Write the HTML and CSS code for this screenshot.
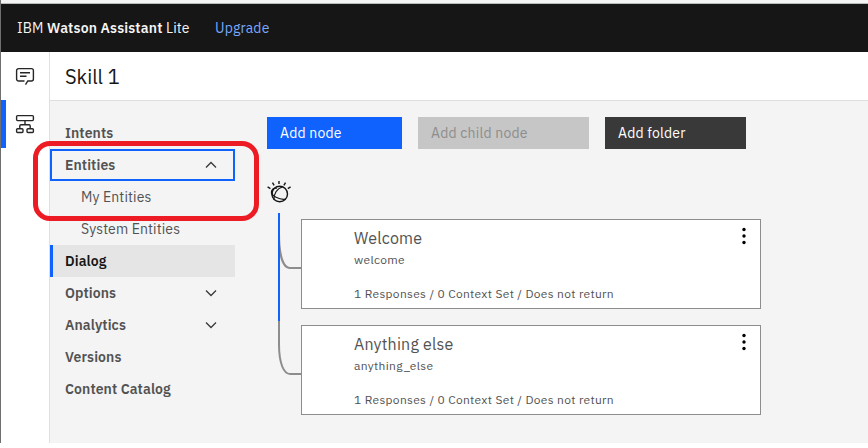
FILE: index.html
```html
<!DOCTYPE html>
<html lang="en">
<head>
<meta charset="utf-8">
<title>IBM Watson Assistant Lite</title>
<link rel="stylesheet" href="styles.css">
</head>
<body>
<div class="app">
  <header class="topbar">
    <div class="brand">IBM <b>Watson Assistant</b> Lite</div>
    <a class="upgrade">Upgrade</a>
  </header>
  <div class="shell">
    <nav class="rail">
      <a class="rail-item"><svg width="20" height="20" viewBox="0 0 20 20"><g fill="none" stroke="#262626" stroke-width="1.4"><path d="M9.500 15H3.600a2 2 0 0 1-2-2V4.600a2 2 0 0 1 2-2h12.800a2 2 0 0 1 2 2V13a2 2 0 0 1-2 2h-3.600l-2.300 3.700M5 6.800h10M5 10.300h6.500"/></g></svg></a>
      <a class="rail-item rail-item--active"><svg width="20" height="20" viewBox="0 0 20 20"><g fill="none" stroke="#262626" stroke-width="1.4"><rect x="1.600" y="1.600" width="16.800" height="5" rx="1"/><rect x="1.600" y="14.700" width="6.400" height="3.800" rx="1"/><rect x="12" y="14.700" width="6.400" height="3.800" rx="1"/><path d="M10 6.600v4M4.800 14.700v-2.800a1.200 1.200 0 0 1 1.200-1.200h8a1.200 1.200 0 0 1 1.200 1.200v2.800"/></g></svg></a>
    </nav>
    <main class="page">
      <h1 class="title">Skill 1</h1>
      <div class="workspace">
        <ul class="menu">
          <li class="item"><span>Intents</span></li>
          <li class="item item--focus"><span>Entities</span><svg class="chev" width="12" height="8" viewBox="0 0 12 8"><path d="M1 6.500 6 1.500l5 5"/></svg></li>
          <li class="item item--sub"><span>My Entities</span></li>
          <li class="item item--sub"><span>System Entities</span></li>
          <li class="item item--current"><span>Dialog</span></li>
          <li class="item"><span>Options</span><svg class="chev" width="12" height="8" viewBox="0 0 12 8"><path d="M1 1.500l5 5 5-5"/></svg></li>
          <li class="item"><span>Analytics</span><svg class="chev" width="12" height="8" viewBox="0 0 12 8"><path d="M1 1.500l5 5 5-5"/></svg></li>
          <li class="item"><span>Versions</span></li>
          <li class="item"><span>Content Catalog</span></li>
        </ul>
        <section class="editor">
          <div class="actions">
            <button class="btn btn--primary">Add node</button>
            <button class="btn btn--disabled" disabled>Add child node</button>
            <button class="btn btn--dark">Add folder</button>
          </div>
          <svg class="watson" width="24" height="24" viewBox="0 0 24 24"><g fill="none" stroke="#161616" stroke-width="1.400"><circle cx="12.700" cy="14" r="7.800"/><path d="M15.600 7C10 8.200 6.500 14.200 7 19.700M5.300 12.800C4.300 15.400 12 20 18.400 19.200M9.800 8.400C4.500 7.200 3 12.700 6 15.700" stroke-width="1.200"/><path d="M12 1v3M5.500 2.700l1.600 2.700M18.500 2.700l-1.600 2.700M.6 6.900l2.800 1.700M23.600 6.900l-2.800 1.700"/></g></svg>
          <div class="tree">
            <svg class="links" width="23" height="202" viewBox="0 0 23 202"><g fill="none" stroke="#8d8d8d"><path d="M1 20C1 45 6 55 12 55H23" stroke-width="2"/><path d="M1 108V131C1 151 6 161 12 161H23" stroke-width="2"/></g><path d="M1 0V108" stroke="#0f62fe" stroke-width="2"/></svg>
            <div class="nodes">
              <article class="node">
                <div><h2>Welcome</h2><p>welcome</p><p class="meta">1 Responses / 0 Context Set / Does not return</p></div>
                <svg class="kebab" width="6" height="18" viewBox="0 0 6 18"><circle cx="3" cy="2.500" r="1.700"/><circle cx="3" cy="9" r="1.700"/><circle cx="3" cy="15.500" r="1.700"/></svg>
              </article>
              <article class="node">
                <div><h2>Anything else</h2><p>anything_else</p><p class="meta">1 Responses / 0 Context Set / Does not return</p></div>
                <svg class="kebab" width="6" height="18" viewBox="0 0 6 18"><circle cx="3" cy="2.500" r="1.700"/><circle cx="3" cy="9" r="1.700"/><circle cx="3" cy="15.500" r="1.700"/></svg>
              </article>
            </div>
          </div>
        </section>
      </div>
    </main>
  </div>
  <div class="highlight"></div>
</div>
</body>
</html>
```
FILE: styles.css
```css
* { box-sizing: border-box; margin: 0; padding: 0; }
body { background: #fff; font: 14px/18px "IBM Plex Sans", Roboto, sans-serif; color: #525252; overflow: hidden; }
svg { display: block; flex: none; }
.app { position: relative; height: 443px; border-left: 1px solid #6f6f6f; display: flex; flex-direction: column; white-space: nowrap; }
.topbar { height: 52px; flex: none; background: #161616; border-top: 3px solid #f4f4f4; box-shadow: inset 0 1px #b9bdb9; display: flex; align-items: center; padding-left: 16px; }
.brand { color: #f4f4f4; width: 198px; letter-spacing: .16px; }
.brand b { font-weight: 600; }
.upgrade { color: #78a9ff; letter-spacing: .16px; }
.shell { flex: 1; display: flex; min-height: 0; }
.rail { width: 49px; border-right: 1px solid #e0e0e0; background: #fff; }
.rail-item { height: 48px; display: flex; align-items: center; padding-left: 14px; }
.rail-item--active { border-left: 5px solid #0f62fe; padding-left: 9px; }
.page { flex: 1; display: flex; flex-direction: column; }
.title { height: 49px; flex: none; border-bottom: 1px solid #e0e0e0; color: #161616; font-size: 20px; font-weight: 400; line-height: 50px; padding-left: 15px; }
.workspace { flex: 1; display: flex; background: #f4f4f4; padding-top: 16px; }
.menu { width: 185px; list-style: none; font-weight: 600; letter-spacing: .1px; }
.item { height: 32px; display: flex; align-items: center; justify-content: space-between; padding: 0 18px 0 15px; }
.item--focus { border: 2px solid #0f62fe; padding: 0 16px 0 13px; }
.item--sub { font-weight: 400; padding-left: 31px; letter-spacing: .12px; }
.item--current { background: #e5e5e5; border-left: 3px solid #0f62fe; color: #161616; padding-left: 12px; }
.chev { fill: none; stroke: #393939; stroke-width: 1.3; }
.editor { padding-left: 32px; }
.actions { display: flex; gap: 16px; }
.btn { height: 32px; border: 0; font: inherit; color: #fff; text-align: left; padding-left: 13px; letter-spacing: .2px; }
.btn--primary { width: 135px; background: #0f62fe; }
.btn--disabled { width: 171px; background: #c6c6c6; color: #8d8d8d; }
.btn--dark { width: 141px; background: #393939; }
.watson { margin-top: 31px; }
.tree { display: flex; padding: 9px 0 0 11px; }
.nodes { display: flex; flex-direction: column; gap: 16px; padding-top: 6px; }
.node { width: 460px; height: 90px; background: #fff; border: 1px solid #8d8d8d; display: flex; justify-content: space-between; padding: 7px 13px 0 52px; }
.node h2 { font-size: 16px; line-height: 22px; font-weight: 400; letter-spacing: .2px; }
.node p { font-size: 12px; line-height: 16px; margin-top: 3px; letter-spacing: .32px; }
.node .meta { margin-top: 18px; }
.highlight { position: absolute; left: 32px; top: 141px; width: 226px; height: 80px; border: 5px solid #ed1c24; border-radius: 17px; }
```
